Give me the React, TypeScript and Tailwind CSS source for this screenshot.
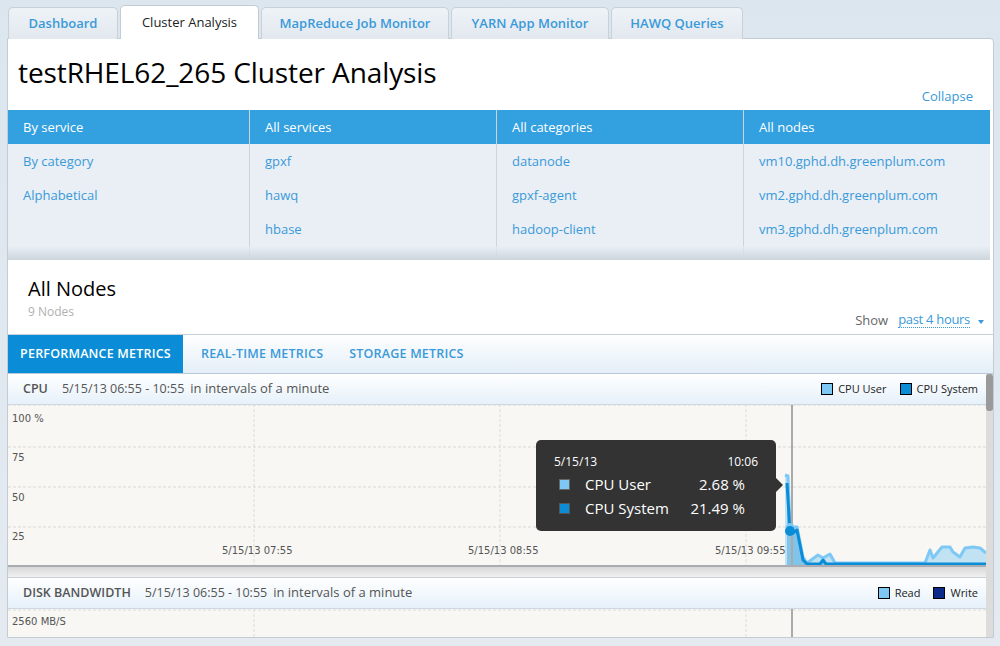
const topTabs = [
  { label: 'Dashboard', w: 'w-[110px]' },
  { label: 'Cluster Analysis', w: 'w-[139px]', active: true },
  { label: 'MapReduce Job Monitor', w: 'w-[188px]' },
  { label: 'YARN App Monitor', w: 'w-[158px]' },
  { label: 'HAWQ Queries', w: 'w-[132px]' },
]

const columns = [
  { head: 'By service', items: ['By category', 'Alphabetical'], w: 'w-[241px]' },
  { head: 'All services', items: ['gpxf', 'hawq', 'hbase', 'hdfs'], w: 'w-[247px] border-l' },
  { head: 'All categories', items: ['datanode', 'gpxf-agent', 'hadoop-client', 'hbase'], w: 'w-[247px] border-l' },
  {
    head: 'All nodes',
    items: ['vm10.gphd.dh.greenplum.com', 'vm2.gphd.dh.greenplum.com', 'vm3.gphd.dh.greenplum.com', 'vm4.gphd.dh.greenplum.com'],
    w: 'w-[247px] border-l',
  },
]

// ── chart drawing (coords relative to the chart box, 978 x 162) ──
const lightArea =
  '777,162 777,71 780,72 782,123 789,123 795,153 799,159 810,151 815,154 822,150 827,159 917,159 922,146 925,154 934,143 942,143 945,148 952,153 957,144 965,143 972,144 978,149 978,162'
const lightLine =
  '777,71 780,72 782,123 789,123 795,153 799,159 810,151 815,154 822,150 827,159 917,159 922,146 925,154 934,143 942,143 945,148 952,153 957,144 965,143 972,144 978,149'
const darkLine = '779,79 782,128 785,129 789,126 795,156 799,160 812,160 815,156 818,160 978,160'
const darkArea = '779,162 779,79 782,128 785,129 789,126 795,156 799,160 812,160 815,156 818,160 978,160 978,162'

const axisText = "absolute font-['DejaVu_Sans',sans-serif] text-[10px] leading-[12px] text-[#555]"

function CpuChart() {
  return (
    <div className="relative h-[162px] overflow-hidden bg-[#f8f7f3] border-b-2 border-[#a9adb1]">
      <svg width="978" height="160" viewBox="0 1 978 160" className="absolute left-0 top-0">
        {[1, 43, 83, 123].map((y) => (
          <line key={y} x1="0" x2="978" y1={y} y2={y} stroke="#d9d9d6" strokeDasharray="3 2" />
        ))}
        {[246, 492, 738].map((x) => (
          <line key={x} x1={x} x2={x} y1="0" y2="162" stroke="#dcdcd9" strokeDasharray="3 2" />
        ))}
        <polygon points={lightArea} fill="#7ec8f5" fillOpacity="0.45" />
        <polygon points={darkArea} fill="#0a8dd6" fillOpacity="0.35" />
        <polyline points={lightLine} fill="none" stroke="#7ec8f5" strokeWidth="3" strokeLinejoin="round" />
        <polyline points={darkLine} fill="none" stroke="#0a8dd6" strokeWidth="3" strokeLinejoin="round" />
        <line x1="784" x2="784" y1="0" y2="162" stroke="#aaaaaa" strokeWidth="2" />
        <circle cx="782" cy="123" r="4" fill="#7ec8f5" />
        <circle cx="782" cy="127" r="5" fill="#0a8dd6" />
      </svg>
      <div className={`${axisText} left-[4px] top-[8px]`}>100 %</div>
      <div className={`${axisText} left-[4px] top-[47px]`}>75</div>
      <div className={`${axisText} left-[4px] top-[87px]`}>50</div>
      <div className={`${axisText} left-[4px] top-[126px]`}>25</div>
      <div className={`${axisText} left-[214px] top-[140px]`}>5/15/13 07:55</div>
      <div className={`${axisText} left-[460px] top-[140px]`}>5/15/13 08:55</div>
      <div className={`${axisText} left-[707px] top-[140px]`}>5/15/13 09:55</div>

      {/* tooltip */}
      <div className="absolute left-[528px] top-[35px] w-[240px] h-[91px] rounded-[5px] bg-[#333333] text-white px-[18px] pt-[14px]">
        <div className="flex justify-between text-[12px] leading-[16px]">
          <span>5/15/13</span>
          <span>10:06</span>
        </div>
        <div className="mt-[2px] flex items-center text-[15px] leading-[24px]">
          <span className="w-[11px] h-[11px] ml-[5px] bg-[#7ec8f5] border border-[#666]" />
          <span className="ml-[15px] w-[110px]">CPU User</span>
          <span className="w-[50px] text-right">2.68 %</span>
        </div>
        <div className="flex items-center text-[15px] leading-[24px]">
          <span className="w-[11px] h-[11px] ml-[5px] bg-[#0a8dd6] border border-[#555]" />
          <span className="ml-[15px] w-[96px]">CPU System</span>
          <span className="w-[64px] text-right">21.49 %</span>
        </div>
        <div className="absolute right-[-7px] top-[38px] w-0 h-0 border-y-[7px] border-y-transparent border-l-[7px] border-l-[#333333]" />
      </div>
    </div>
  )
}

function SectionHeader({ title, legend }: { title: string; legend: { label: string; color: string }[] }) {
  return (
    <div className="h-[31px] flex items-center justify-between pl-[15px] pr-[8px] bg-gradient-to-b from-white to-[#e6f1fa] border-b border-[#cfd8e0] text-[12.5px] text-[#555]">
      <div className="flex items-center">
        <span className="font-semibold">{title}</span>
        <span className="ml-[14px]">5/15/13 06:55 - 10:55</span>
        <span className="ml-[6px] text-[13px]">in intervals of a minute</span>
      </div>
      <div className="flex items-center gap-[13px] text-[11px] text-[#222]">
        {legend.map((l) => (
          <div key={l.label} className="flex items-center gap-[5px]">
            <span className={`w-[12px] h-[12px] border border-black ${l.color}`} />
            <span>{l.label}</span>
          </div>
        ))}
      </div>
    </div>
  )
}

export default function App() {
  return (
    <div className="min-h-[646px] bg-gradient-to-b from-[#dce6ef] to-[#e4eaf0] pt-[5px] font-['Open_Sans',sans-serif]">
      {/* ── top tabs ── */}
      <div className="flex items-end gap-[2px] ml-2 h-[34px] relative z-10">
        {topTabs.map((t) =>
          t.active ? (
            <div
              key={t.label}
              className={`${t.w} h-[34px] bg-white border border-b-0 border-[#c3ccd5] rounded-t-[5px] flex items-center justify-center text-[13px] text-[#222]`}
            >
              {t.label}
            </div>
          ) : (
            <div
              key={t.label}
              className={`${t.w} h-[32px] bg-gradient-to-b from-[#eef3f8] to-[#e2e8ee] border border-b-0 border-[#c8d0d8] rounded-t-[5px] flex items-center justify-center text-[13px] font-semibold text-[#3a9ad9]`}
            >
              {t.label}
            </div>
          ),
        )}
      </div>

      {/* ── main panel ── */}
      <div className="ml-[7px] w-[987px] -mt-px bg-white border border-[#c3ccd5] rounded-tr-[4px]">
        <div className="h-[71px] flex items-start justify-between pl-[10px] pr-[20px]">
          <h1 className="pt-[15px] text-[28px] leading-[36px] text-black tracking-[-0.1px]">testRHEL62_265 Cluster Analysis</h1>
          <span className="self-end pb-[5px] text-[13px] leading-[18px] text-[#3a9ad9]">Collapse</span>
        </div>

        {/* filter columns */}
        <div className="relative h-[150px] overflow-hidden pr-[3px] flex">
          {columns.map((c) => (
            <div key={c.head} className={`${c.w} border-[#cfd4d9] flex flex-col`}>
              <div className="h-[34px] shrink-0 bg-[#33a0e0] text-white text-[13px] flex items-center pl-[15px] pt-[1px]">{c.head}</div>
              <div className="flex-1 bg-[#e9eff5]">
                {c.items.map((it) => (
                  <div key={it} className="h-[34px] flex items-center pl-[15px] pt-[1px] text-[13px] text-[#3a9ad9]">
                    {it}
                  </div>
                ))}
              </div>
            </div>
          ))}
          <div className="absolute left-0 right-[3px] bottom-0 h-[14px] bg-gradient-to-b from-[#e9eff5]/60 to-[#cdd6dd]" />
        </div>

        {/* all nodes */}
        <div className="h-[75px] flex justify-between border-b border-[#c5d0da]">
          <div className="pl-[20px] pt-[15px]">
            <div className="text-[20px] leading-[28px] text-black">All Nodes</div>
            <div className="text-[12px] leading-[17px] text-[#b0b0b0]">9 Nodes</div>
          </div>
          <div className="self-end pb-[5px] pr-[9px] flex items-center text-[13px] leading-[18px]">
            <span className="text-[#666]">Show</span>
            <span className="ml-[10px] text-[#3a9ad9] border-b border-dotted border-[#3a9ad9] leading-[15px] tracking-[-0.3px]">past 4 hours</span>
            <span className="ml-[8px] mt-[3px] w-0 h-0 border-x-[3px] border-x-transparent border-t-[4px] border-t-[#3a9ad9]" />
          </div>
        </div>

        {/* metric tabs */}
        <div className="h-[39px] flex bg-gradient-to-b from-white to-[#e3eef8] border-b border-[#b8c8d6] text-[12.5px] font-semibold tracking-[0.2px]">
          <div className="w-[175px] bg-[#0a8dd6] text-white flex items-center justify-center">PERFORMANCE METRICS</div>
          <div className="pl-[18px] pr-[26px] text-[#3a9ad9] flex items-center">REAL-TIME METRICS</div>
          <div className="text-[#3a9ad9] flex items-center">STORAGE METRICS</div>
        </div>

        {/* charts with scrollbar */}
        <div className="flex">
          <div className="w-[978px]">
            <SectionHeader
              title="CPU"
              legend={[
                { label: 'CPU User', color: 'bg-[#7ec8f5]' },
                { label: 'CPU System', color: 'bg-[#0a8dd6]' },
              ]}
            />
            <CpuChart />
            <div className="h-[11px] bg-gradient-to-b from-[#d8d8d8] to-[#f1f1f1] border-b border-[#c8d0d8]" />
            <SectionHeader
              title="DISK BANDWIDTH"
              legend={[
                { label: 'Read', color: 'bg-[#7ec8f5]' },
                { label: 'Write', color: 'bg-[#0b2a8a]' },
              ]}
            />
            <div className="relative h-[28px] bg-[#f8f7f3]">
              <svg width="978" height="28" className="absolute left-0 top-0">
                <line x1="0" x2="978" y1="1" y2="1" stroke="#dcdcd9" strokeDasharray="3 2" />
                <line x1="246" x2="246" y1="0" y2="28" stroke="#dcdcd9" strokeDasharray="3 2" />
                <line x1="738" x2="738" y1="0" y2="28" stroke="#dcdcd9" strokeDasharray="3 2" />
                <line x1="784" x2="784" y1="0" y2="28" stroke="#aaaaaa" strokeWidth="2" />
              </svg>
              <div className={`${axisText} left-[4px] top-[7px]`}>2560 MB/S</div>
            </div>
          </div>
          <div className="w-[7px] bg-[#dcdcdc]">
            <div className="h-[37px] bg-[#9a9a9a] rounded-[3px]" />
          </div>
        </div>
      </div>
    </div>
  )
}
